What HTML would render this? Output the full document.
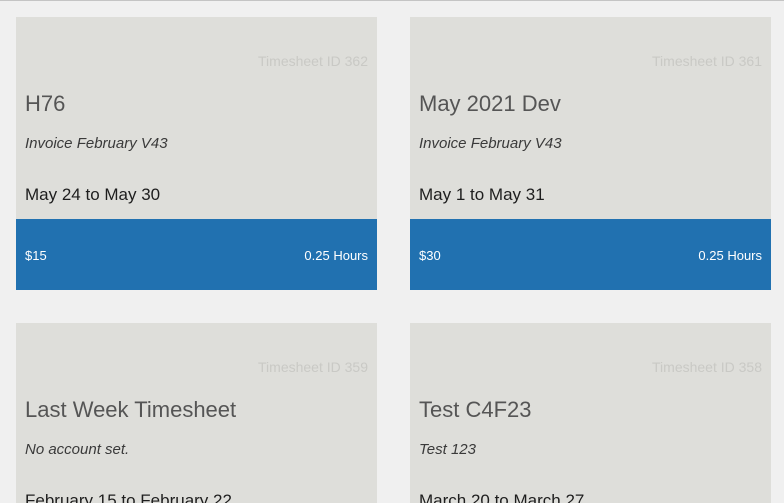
<!DOCTYPE html>
<html style="overflow:hidden;height:503px"><head><style>
body{margin:0;width:784px;height:503px;overflow:hidden;background:#f0f0f0;font-family:"Liberation Sans",sans-serif;position:relative;border-top:1px solid #c4c4c4;box-sizing:border-box}
.c{position:absolute;width:361px;background:#dededa;overflow:hidden}
.id{position:absolute;right:9px;top:36px;font-size:14px;color:#c9c9c5;white-space:nowrap}
.t{position:absolute;left:9px;top:74px;font-size:22px;color:#555;white-space:nowrap}
.i{position:absolute;left:9px;top:118px;font-size:15px;font-style:italic;color:#3a3a3a;white-space:nowrap}
.d{position:absolute;left:9px;top:168px;font-size:17px;color:#1e1e1e;white-space:nowrap}
.b{position:absolute;left:0;right:0;top:202px;height:71px;background:#2171b0;color:#fff;font-size:13px}
.b span{position:absolute;top:29px}
</style></head><body>
<div class="c" style="left:16px;top:16px;height:273px">
<div class="id">Timesheet ID 362</div><div class="t">H76</div><div class="i">Invoice February V43</div><div class="d">May 24 to May 30</div>
<div class="b"><span style="left:9px">$15</span><span style="right:9px">0.25 Hours</span></div></div>
<div class="c" style="left:410px;top:16px;height:273px">
<div class="id">Timesheet ID 361</div><div class="t">May 2021 Dev</div><div class="i">Invoice February V43</div><div class="d">May 1 to May 31</div>
<div class="b"><span style="left:9px">$30</span><span style="right:9px">0.25 Hours</span></div></div>
<div class="c" style="left:16px;top:322px;height:181px">
<div class="id">Timesheet ID 359</div><div class="t">Last Week Timesheet</div><div class="i">No account set.</div><div class="d">February 15 to February 22</div></div>
<div class="c" style="left:410px;top:322px;height:181px">
<div class="id">Timesheet ID 358</div><div class="t">Test C4F23</div><div class="i">Test 123</div><div class="d">March 20 to March 27</div></div>
</body></html>
